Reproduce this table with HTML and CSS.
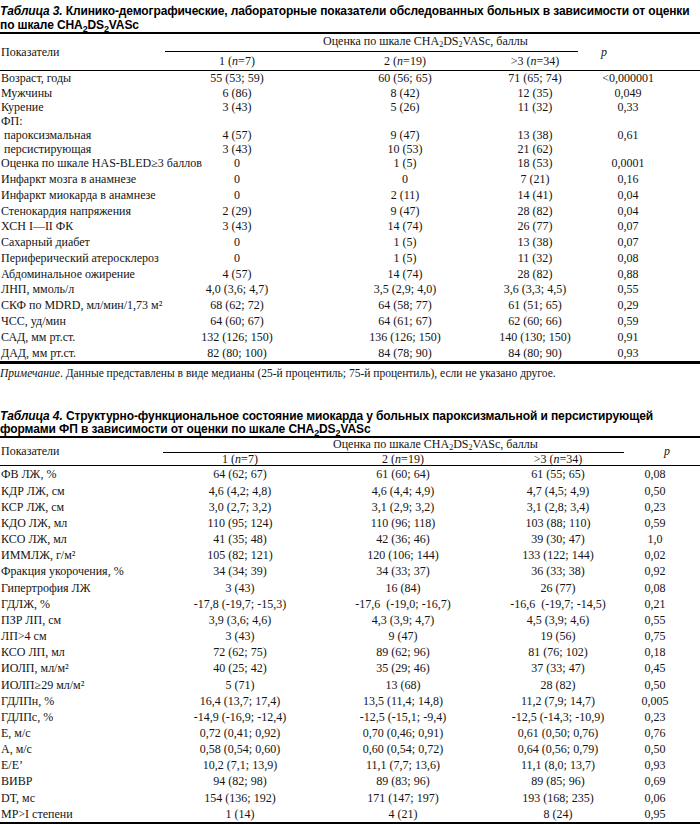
FILE: index.html
```html
<!DOCTYPE html>
<html lang="ru">
<head>
<meta charset="utf-8">
<title>Таблицы 3 и 4</title>
<link rel="stylesheet" href="styles.css">
</head>
<body>
<div class="caption cap3"><span class="num">Таблица 3.</span> Клинико-демографические, лабораторные показатели обследованных больных в зависимости от оценки<br>по шкале CHA<sub>2</sub>DS<sub>2</sub>VASc</div>
<table class="t t3">
<colgroup><col class="c0"><col class="c1"><col class="c2"><col class="c3"><col class="c4"><col></colgroup>
<thead>
<tr class="h1"><th class="lbl" rowspan="2">Показатели</th><th class="grp" colspan="3"><span class="grpline">Оценка по шкале CHA<sub>2</sub>DS<sub>2</sub>VASc, баллы</span></th><th class="ph" rowspan="2" colspan="2"><i>p</i></th></tr>
<tr class="h2"><th>1 (<i>n</i>=7)</th><th>2 (<i>n</i>=19)</th><th>&gt;3 (<i>n</i>=34)</th></tr>
</thead>
<tbody>
<tr class="tight"><td class="lbl">Возраст, годы</td><td>55 (53; 59)</td><td>60 (56; 65)</td><td>71 (65; 74)</td><td>&lt;0,000001</td><td></td></tr>
<tr class="tight"><td class="lbl">Мужчины</td><td>6 (86)</td><td>8 (42)</td><td>12 (35)</td><td>0,049</td><td></td></tr>
<tr class="tight"><td class="lbl">Курение</td><td>3 (43)</td><td>5 (26)</td><td>11 (32)</td><td>0,33</td><td></td></tr>
<tr class="sub first"><td class="lbl">ФП:</td><td></td><td></td><td></td><td></td><td></td></tr>
<tr class="sub"><td class="lbl ind">пароксизмальная</td><td>4 (57)</td><td>9 (47)</td><td>13 (38)</td><td>0,61</td><td></td></tr>
<tr class="sub"><td class="lbl ind">персистирующая</td><td>3 (43)</td><td>10 (53)</td><td>21 (62)</td><td></td><td></td></tr>
<tr><td class="lbl">Оценка по шкале HAS-BLED≥3 баллов</td><td>0</td><td>1 (5)</td><td>18 (53)</td><td>0,0001</td><td></td></tr>
<tr><td class="lbl">Инфаркт мозга в анамнезе</td><td>0</td><td>0</td><td>7 (21)</td><td>0,16</td><td></td></tr>
<tr><td class="lbl">Инфаркт миокарда в анамнезе</td><td>0</td><td>2 (11)</td><td>14 (41)</td><td>0,04</td><td></td></tr>
<tr><td class="lbl">Стенокардия напряжения</td><td>2 (29)</td><td>9 (47)</td><td>28 (82)</td><td>0,04</td><td></td></tr>
<tr><td class="lbl">ХСН I—II ФК</td><td>3 (43)</td><td>14 (74)</td><td>26 (77)</td><td>0,07</td><td></td></tr>
<tr><td class="lbl">Сахарный диабет</td><td>0</td><td>1 (5)</td><td>13 (38)</td><td>0,07</td><td></td></tr>
<tr><td class="lbl">Периферический атеросклероз</td><td>0</td><td>1 (5)</td><td>11 (32)</td><td>0,08</td><td></td></tr>
<tr><td class="lbl">Абдоминальное ожирение</td><td>4 (57)</td><td>14 (74)</td><td>28 (82)</td><td>0,88</td><td></td></tr>
<tr><td class="lbl">ЛНП, ммоль/л</td><td>4,0 (3,6; 4,7)</td><td>3,5 (2,9; 4,0)</td><td>3,6 (3,3; 4,5)</td><td>0,55</td><td></td></tr>
<tr><td class="lbl">СКФ по MDRD, мл/мин/1,73 м²</td><td>68 (62; 72)</td><td>64 (58; 77)</td><td>61 (51; 65)</td><td>0,29</td><td></td></tr>
<tr><td class="lbl">ЧСС, уд/мин</td><td>64 (60; 67)</td><td>64 (61; 67)</td><td>62 (60; 66)</td><td>0,59</td><td></td></tr>
<tr><td class="lbl">САД, мм рт.ст.</td><td>132 (126; 150)</td><td>136 (126; 150)</td><td>140 (130; 150)</td><td>0,91</td><td></td></tr>
<tr class="last"><td class="lbl">ДАД, мм рт.ст.</td><td>82 (80; 100)</td><td>84 (78; 90)</td><td>84 (80; 90)</td><td>0,93</td><td></td></tr>
</tbody>
</table>
<p class="note"><i>Примечание</i>. Данные представлены в виде медианы (25-й процентиль; 75-й процентиль), если не указано другое.</p>

<div class="caption cap4"><span class="num">Таблица 4.</span> Структурно-функциональное состояние миокарда у больных пароксизмальной и персистирующей<br>формами ФП в зависимости от оценки по шкале CHA<sub>2</sub>DS<sub>2</sub>VASc</div>
<table class="t t4">
<colgroup><col class="c0"><col class="c1"><col class="c2"><col class="c3"><col class="c4"><col></colgroup>
<thead>
<tr class="h1"><th class="lbl" rowspan="2">Показатели</th><th class="grp" colspan="3"><span class="grpline">Оценка по шкале CHA<sub>2</sub>DS<sub>2</sub>VASc, баллы</span></th><th class="ph" rowspan="2" colspan="2"><i>p</i></th></tr>
<tr class="h2"><th>1 (<i>n</i>=7)</th><th>2 (<i>n</i>=19)</th><th>&gt;3 (<i>n</i>=34)</th></tr>
</thead>
<tbody>
<tr><td class="lbl">ФВ ЛЖ, %</td><td>64 (62; 67)</td><td>61 (60; 64)</td><td>61 (55; 65)</td><td>0,08</td><td></td></tr>
<tr><td class="lbl">КДР ЛЖ, см</td><td>4,6 (4,2; 4,8)</td><td>4,6 (4,4; 4,9)</td><td>4,7 (4,5; 4,9)</td><td>0,50</td><td></td></tr>
<tr><td class="lbl">КСР ЛЖ, см</td><td>3,0 (2,7; 3,2)</td><td>3,1 (2,9; 3,2)</td><td>3,1 (2,8; 3,4)</td><td>0,23</td><td></td></tr>
<tr><td class="lbl">КДО ЛЖ, мл</td><td>110 (95; 124)</td><td>110 (96; 118)</td><td>103 (88; 110)</td><td>0,59</td><td></td></tr>
<tr><td class="lbl">КСО ЛЖ, мл</td><td>41 (35; 48)</td><td>42 (36; 46)</td><td>39 (30; 47)</td><td>1,0</td><td></td></tr>
<tr><td class="lbl">ИММЛЖ, г/м²</td><td>105 (82; 121)</td><td>120 (106; 144)</td><td>133 (122; 144)</td><td>0,02</td><td></td></tr>
<tr><td class="lbl">Фракция укорочения, %</td><td>34 (34; 39)</td><td>34 (33; 37)</td><td>36 (33; 38)</td><td>0,92</td><td></td></tr>
<tr><td class="lbl">Гипертрофия ЛЖ</td><td>3 (43)</td><td>16 (84)</td><td>26 (77)</td><td>0,08</td><td></td></tr>
<tr><td class="lbl">ГДЛЖ, %</td><td>-17,8 (-19,7; -15,3)</td><td>-17,6&nbsp; (-19,0; -16,7)</td><td>-16,6&nbsp; (-19,7; -14,5)</td><td>0,21</td><td></td></tr>
<tr><td class="lbl">ПЗР ЛП, см</td><td>3,9 (3,6; 4,6)</td><td>4,3 (3,9; 4,7)</td><td>4,5 (3,9; 4,6)</td><td>0,55</td><td></td></tr>
<tr><td class="lbl">ЛП&gt;4 см</td><td>3 (43)</td><td>9 (47)</td><td>19 (56)</td><td>0,75</td><td></td></tr>
<tr><td class="lbl">КСО ЛП, мл</td><td>72 (62; 75)</td><td>89 (62; 96)</td><td>81 (76; 102)</td><td>0,18</td><td></td></tr>
<tr><td class="lbl">ИОЛП, мл/м²</td><td>40 (25; 42)</td><td>35 (29; 46)</td><td>37 (33; 47)</td><td>0,45</td><td></td></tr>
<tr><td class="lbl">ИОЛП≥29 мл/м²</td><td>5 (71)</td><td>13 (68)</td><td>28 (82)</td><td>0,50</td><td></td></tr>
<tr><td class="lbl">ГДЛПн, %</td><td>16,4 (13,7; 17,4)</td><td>13,5 (11,4; 14,8)</td><td>11,2 (7,9; 14,7)</td><td>0,005</td><td></td></tr>
<tr><td class="lbl">ГДЛПс, %</td><td>-14,9 (-16,9; -12,4)</td><td>-12,5 (-15,1; -9,4)</td><td>-12,5 (-14,3; -10,9)</td><td>0,23</td><td></td></tr>
<tr><td class="lbl">E, м/с</td><td>0,72 (0,41; 0,92)</td><td>0,70 (0,46; 0,91)</td><td>0,61 (0,50; 0,76)</td><td>0,76</td><td></td></tr>
<tr><td class="lbl">A, м/с</td><td>0,58 (0,54; 0,60)</td><td>0,60 (0,54; 0,72)</td><td>0,64 (0,56; 0,79)</td><td>0,50</td><td></td></tr>
<tr><td class="lbl">E/E’</td><td>10,2 (7,1; 13,9)</td><td>11,1 (7,7; 13,6)</td><td>11,1 (8,0; 13,7)</td><td>0,93</td><td></td></tr>
<tr><td class="lbl">ВИВР</td><td>94 (82; 98)</td><td>89 (83; 96)</td><td>89 (85; 96)</td><td>0,69</td><td></td></tr>
<tr><td class="lbl">DT, мс</td><td>154 (136; 192)</td><td>171 (147; 197)</td><td>193 (168; 235)</td><td>0,06</td><td></td></tr>
<tr class="last"><td class="lbl">МР&gt;I степени</td><td>1 (14)</td><td>4 (21)</td><td>8 (24)</td><td>0,95</td><td></td></tr>
</tbody>
</table>
</body>
</html>
```
FILE: styles.css
```css
* { box-sizing: border-box; }

body {
  margin: 0;
  width: 700px;
  background: #fff;
  color: #141414;
  font-family: "Liberation Serif", "Times New Roman", serif;
  font-size: 12px;
}

.caption {
  font-family: "Liberation Sans", Arial, sans-serif;
  font-weight: bold;
  font-size: 12px;
  color: #000;
  white-space: nowrap;
  border-bottom: 2px solid #000;
}
.caption .num { font-style: italic; }
.caption sub { font-size: 9px; vertical-align: -3px; line-height: 0; }

.cap3 { padding-top: 5px; line-height: 13.5px; letter-spacing: -0.12px; }
.cap4 { padding-top: 1px; line-height: 13px; letter-spacing: -0.1px; }

.t {
  width: 700px;
  border-collapse: collapse;
  table-layout: fixed;
}
.t th, .t td {
  padding: 0;
  font-weight: normal;
  white-space: nowrap;
  text-align: center;
  vertical-align: middle;
  overflow: visible;
}
.t sub { font-size: 8px; vertical-align: -2px; line-height: 0; }
.t .lbl { text-align: left; padding-left: 1px; }
.t .ind { padding-left: 4px; }
.t thead tr.h2 { border-bottom: 1px solid #000; }
.t tbody tr.last { border-bottom: 3px solid #000; }

.t .grp { vertical-align: top; }
.grpline {
  display: block;
  border-bottom: 1px solid #000;
  text-align: left;
}
.t .ph { text-align: left; }

/* Table 3 geometry */
.t3 .c0 { width: 145px; }
.t3 .c1 { width: 184px; }
.t3 .c2 { width: 152px; }
.t3 .c3 { width: 108px; }
.t3 .c4 { width: 78px; }
.t3 .h1 th { height: 18px; }
.t3 .grpline { margin: 0 11px 0 20px; padding: 0 0 3px 158px; line-height: 14px; }
.t3 .ph { padding-left: 12px; }
.t3 .h2 th { height: 18px; line-height: 18px; }
.t3 tbody td { height: 15.8px; line-height: 15.8px; }
.t3 tbody tr.tight td { height: 14.5px; line-height: 14.5px; }
.t3 tbody tr.sub td { height: 14.2px; line-height: 14.2px; }
.t3 tbody tr.sub.first td { height: 13.2px; line-height: 13.2px; }

.note {
  margin: 2px 0 29px;
  font-size: 11.5px;
  line-height: 14px;
}

/* Table 4 geometry */
.t4 .c0 { width: 166px; }
.t4 .c1 { width: 148px; }
.t4 .c2 { width: 178px; }
.t4 .c3 { width: 132px; }
.t4 .c4 { width: 62px; }
.t4 .h1 th { height: 14px; }
.t4 .grpline { margin: 0 0 0 -3px; padding: 0 0 1px 170px; line-height: 13px; }
.t4 .ph { padding-left: 40px; }
.t4 .h2 th { height: 12px; line-height: 12px; }
.t4 tbody td { height: 16.15px; line-height: 16.15px; }
```
